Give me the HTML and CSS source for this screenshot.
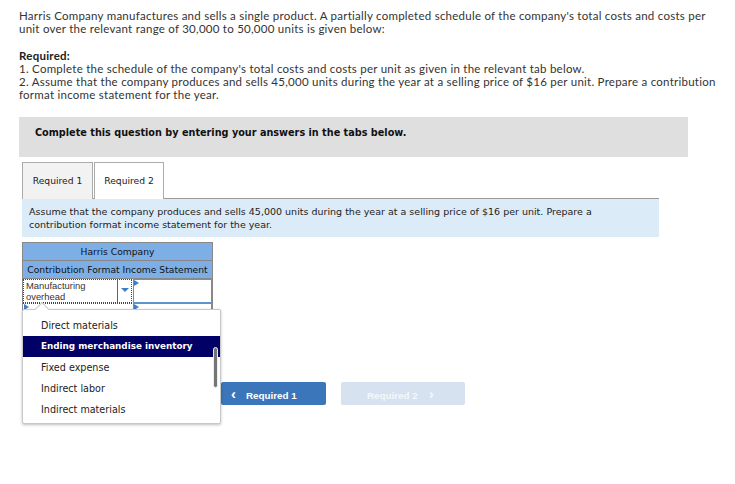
FILE: index.html
```html
<!DOCTYPE html>
<html>
<head>
<meta charset="utf-8">
<link rel="stylesheet" href="styles.css">
</head>
<body>
<div class="page">
  <div class="intro">
    <p class="para">Harris Company manufactures and sells a single product. A partially completed schedule of the company's total costs and costs per unit over the relevant range of 30,000 to 50,000 units is given below:</p>
    <p class="req-title">Required:</p>
    <p class="para">1. Complete the schedule of the company's total costs and costs per unit as given in the relevant tab below.<br>2. Assume that the company produces and sells 45,000 units during the year at a selling price of $16 per unit. Prepare a contribution format income statement for the year.</p>
  </div>

  <div class="notice">Complete this question by entering your answers in the tabs below.</div>

  <div class="work">
    <div class="tabs">
      <div class="tab">Required 1</div>
      <div class="tab active">Required 2</div>
    </div>
    <div class="instr">Assume that the company produces and sells 45,000 units during the year at a selling price of $16 per unit. Prepare a contribution format income statement for the year.</div>

    <div class="table-wrap">
      <div class="stmt">
        <div class="hrow">Harris Company</div>
        <div class="hrow">Contribution Format Income Statement</div>
        <div class="drow">
          <div class="sel focus">
            <span class="sel-text">Manufacturing<br>overhead</span>
            <span class="sel-btn"><span class="caret"></span></span>
          </div>
          <div class="inp"><span class="mark"></span></div>
        </div>
        <div class="drow">
          <div class="sel dotted"><span class="mark"></span></div>
          <div class="inp"><span class="mark"></span></div>
        </div>
        <div class="drow"><div class="sel"></div><div class="inp"></div></div>
        <div class="drow last"><div class="sel"></div><div class="inp"></div></div>
      </div>

      <div class="menu">
        <div class="menu-notch"></div>
        <div class="item">Direct materials</div>
        <div class="item sel-item">Ending merchandise inventory</div>
        <div class="item">Fixed expense</div>
        <div class="item">Indirect labor</div>
        <div class="item">Indirect materials</div>
        <div class="scroll"></div>
      </div>
    </div>

    <div class="nav">
      <div class="btn prev"><span class="chev">&#x2039;</span>Required 1</div>
      <div class="btn next">Required 2<span class="chev r">&#x203A;</span></div>
    </div>
  </div>
</div>
</body>
</html>
```

FILE: styles.css
```css
* { box-sizing: border-box; }
html, body { margin: 0; padding: 0; background: #fff; }
.page { padding: 9px 0 0 19px; width: 735px; min-height: 484px; }

.intro { font-family: "Lato", "Open Sans", sans-serif; font-size: 11.5px; letter-spacing: 0.25px; line-height: 13px; color: #333; width: 700px; }
.intro p { margin: 0; }
.para + .req-title { margin-top: 14px; }
.req-title { font-weight: 700; color: #222; }

.notice {
  margin-top: 16px;
  width: 669px; height: 40px;
  background: #dfdfdf;
  font-family: "DejaVu Sans", Verdana, sans-serif;
  font-weight: 700; font-size: 9.7px; color: #111;
  padding: 10px 0 0 16px;
}

.work { margin-left: 3px; width: 637px; }
.tabs { display: flex; margin-top: 5px; border-bottom: 1px solid #999; height: 37px; }
.tab {
  width: 71px; height: 37px;
  background: #f2f2f2; border: 1px solid #ababab; border-bottom: none;
  font-family: "DejaVu Sans", Verdana, sans-serif; font-size: 9.2px; color: #222;
  padding-top: 12px; text-align: center;
}
.tab.active { background: #fff; width: 70px; margin-left: 1px; }

.instr {
  background: #dcebf8;
  font-family: "DejaVu Sans", Verdana, sans-serif; font-size: 9.5px; line-height: 13px; color: #222;
  padding: 6px 7px 6px 7px; height: 38px;
}

.table-wrap { position: relative; margin-top: 5px; z-index: 5; }
.stmt { width: 191px; border-left: 1px solid #888; border-right: 1px solid #888; border-top: 1px solid #888; }
.hrow {
  height: 18px; background: #7dafe6; border-bottom: 1px solid #888;
  font-family: "DejaVu Sans", Verdana, sans-serif; font-size: 9.2px; color: #111;
  text-align: center; line-height: 17px; white-space: nowrap; overflow: hidden;
}
.drow { display: flex; height: 24px; }
.drow.last { height: 21px; }
.sel { position: relative; width: 109px; height: 100%; }
.sel.focus { border: 1px dotted #1f4d86; display: flex; }
.sel.dotted { border-top: 1px dotted #1f4d86; }
.sel-text { flex: 1; font-family: "Liberation Sans", Arial, sans-serif; font-size: 9.4px; line-height: 11px; color: #333; padding: 0 0 0 2px; white-space: nowrap; overflow: hidden; }
.sel-btn { width: 14px; border-left: 1px solid #3a6ea5; position: relative; }
.caret { position: absolute; left: 3px; top: 8px; width: 0; height: 0; border-left: 4px solid transparent; border-right: 4px solid transparent; border-top: 4px solid #3d7cc9; }
.inp { position: relative; flex: 1; height: 100%; border: 1px solid #5f93cc; margin-left: 1px; }
.drow:nth-child(n+5) .inp, .drow:nth-child(n+5) .sel { border: none; }
.mark { position: absolute; left: 0; top: 0; width: 0; height: 0; border-top: 3px solid transparent; border-bottom: 3px solid transparent; border-left: 5px solid #3d7cc9; }
.sel.dotted .mark { left: 1px; top: 0; }

.menu {
  position: absolute; left: 0; top: 67px; z-index: 10;
  width: 199px; height: 115px;
  background: #fff; border: 1px solid #c8c8c8; border-radius: 2px;
  box-shadow: 0 1px 3px rgba(0,0,0,0.25);
  padding-top: 5px;
  font-family: "DejaVu Sans", Verdana, sans-serif; font-size: 9.6px; color: #222;
}
.menu-notch {
  position: absolute; left: 14px; top: -6px; width: 10px; height: 10px;
  background: #fff; border-left: 1px solid #c8c8c8; border-top: 1px solid #c8c8c8;
  transform: rotate(45deg);
}
.item { position: relative; height: 21px; line-height: 21px; padding-left: 18px; white-space: nowrap; }
.item.sel-item { background: #000066; color: #fff; font-weight: 700; font-size: 8.8px; }
.scroll { position: absolute; right: 2px; top: 37px; width: 5px; height: 41px; background: #757575; border-radius: 3px; border: 1px solid #eee; }

.nav { display: flex; gap: 15px; margin-top: 10px; padding-left: 199px; }
.btn {
  height: 23px; border-radius: 2px;
  font-family: "Liberation Sans", Arial, sans-serif; font-weight: 700; font-size: 9.8px;
  line-height: 23px; color: #fff;
}
.btn.prev { width: 105px; background: #3a76b9; padding-left: 10px; }
.btn.next { width: 124px; background: #d6e2f0; padding-left: 26px; color: #f4f7fb; }
.chev { font-size: 15px; display: inline-block; margin-right: 10px; }
.chev.r { margin-right: 0; margin-left: 11px; }
```
